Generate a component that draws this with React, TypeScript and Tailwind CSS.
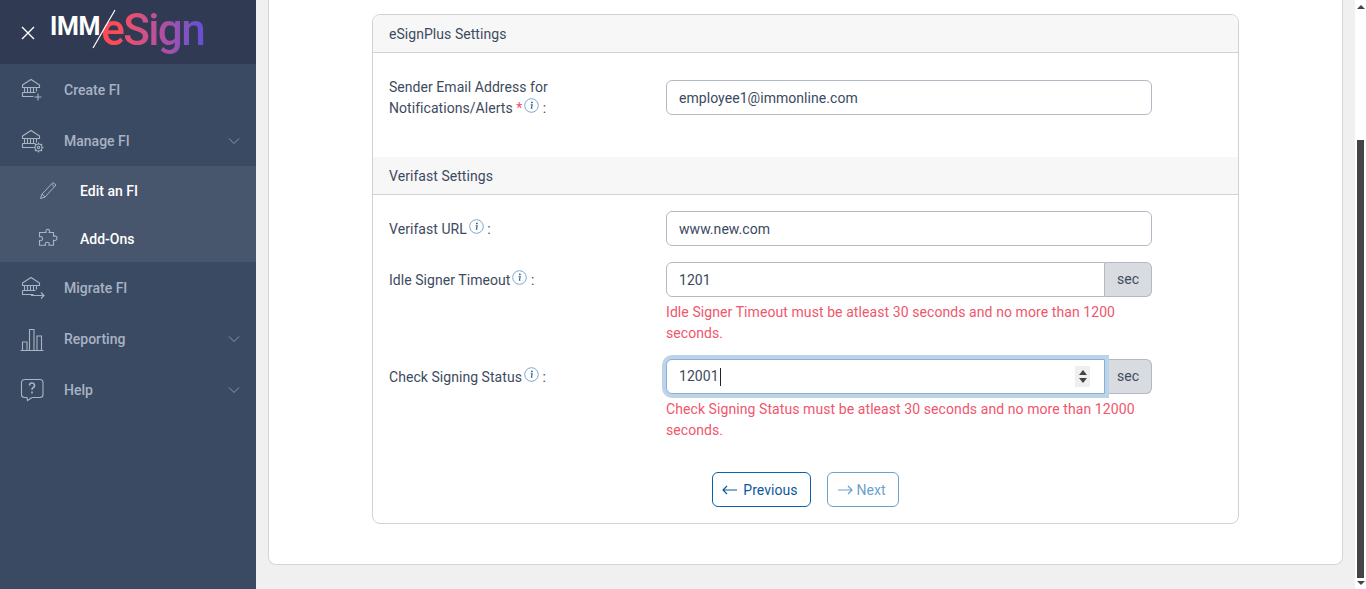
import React from "react";

const S = { stroke: "currentColor", fill: "none", strokeWidth: 1.1 } as const;

function BankBase({ children }: { children?: React.ReactNode }) {
  return (
    <svg width="26" height="26" viewBox="0 0 26 26" {...S} className="shrink-0">
      <path d="M2.500 8 11 2.500 19.500 8v2.500h-17z" />
      <path d="M4.500 10.500v5M7.500 10.500v5M10.500 10.500v5M13.500 10.500v5M16.500 10.500v4" />
      <path d="M2.500 15.500h13M2.500 15.500v4h11" />
      {children}
    </svg>
  );
}

const Chevron = () => (
  <svg width="12" height="8" viewBox="0 0 12 8" fill="none" stroke="currentColor" strokeWidth="1" className="mr-[16px] ml-auto text-[#8c99ad]">
    <path d="M1 1.500 6 6.500 11 1.500" />
  </svg>
);

function Row({ icon, label, chevron }: { icon: React.ReactNode; label: string; chevron?: boolean }) {
  return (
    <div className="flex h-[51px] items-center text-[#a8b3c4]">
      <div className="ml-[20px] flex w-[44px] items-center">{icon}</div>
      <span className="pt-[2px] text-[14px] font-medium">{label}</span>
      {chevron && <Chevron />}
    </div>
  );
}

function SubRow({ icon, label }: { icon: React.ReactNode; label: string }) {
  return (
    <div className="flex h-[48px] items-center">
      <div className="ml-[38px] flex w-[42px] items-center text-[#a8b3c4]">{icon}</div>
      <span className="pt-[2px] text-[14px] font-medium text-white">{label}</span>
    </div>
  );
}

function Sidebar() {
  return (
    <aside className="flex w-[256px] shrink-0 flex-col bg-[#3b4a63]">
      <div className="flex h-[64px] shrink-0 items-center bg-[#303b53]">
        <svg width="16" height="16" viewBox="0 0 16 16" fill="none" stroke="#fff" strokeWidth="1.400" className="ml-[20px] mt-[2px]">
          <path d="M2 2l12 12M14 2 2 14" />
        </svg>
        <div className="relative ml-[14px] flex h-[64px] items-start">
          <span className="mt-[12px] text-[25px] leading-[30px] font-bold tracking-[-0.3px] text-white">IMM</span>
          <svg width="24" height="40" viewBox="0 0 24 40" className="absolute left-[42px] top-[9px]" stroke="#fff" strokeWidth="1.200">
            <path d="M1 39 23 1" />
          </svg>
          <span className="ml-[1px] mt-[3px] bg-gradient-to-r from-[#ff4a55] from-[15%] via-[#b34f9f] via-[58%] to-[#6a4fd0] to-[95%] bg-clip-text text-[44px] leading-[54px] font-medium tracking-[-1.600px] text-transparent">eSign</span>
        </div>
      </div>
      <Row
        label="Create FI"
        icon={
          <BankBase>
            <path d="M18 16.500v7M14.500 20h7" />
          </BankBase>
        }
      />
      <Row
        label="Manage FI"
        chevron
        icon={
          <BankBase>
            <circle cx="18.500" cy="19.500" r="3.500" />
            <circle cx="18.500" cy="19.500" r="1.200" />
            <path d="M18.500 14.500v1.500M18.500 23v1.500M13.500 19.500H15M22 19.500h1.500M15 16l1 1M21 22l1 1M22 16l-1 1M16 22l-1 1" />
          </BankBase>
        }
      />
      <div className="flex flex-col bg-[#47566d]">
        <SubRow
          label="Edit an FI"
          icon={
            <svg width="20" height="20" viewBox="0 0 20 20" fill="none" stroke="currentColor" strokeWidth="1">
              <path d="M15 2.500 18 5 7 17l-4.500 1.500L4 14z" />
              <path d="M13.500 4l3 2.800M4 14l3 3" />
            </svg>
          }
        />
        <SubRow
          label="Add-Ons"
          icon={
            <svg width="20" height="20" viewBox="0 0 20 20" fill="none" stroke="currentColor" strokeWidth="1.100">
              <path d="M8 4.500C7 2 9.500 1 10.500 1.500s1.800 1.500.7 3h4.300v3.700c2-1 3.500.5 3.500 2s-1.500 3-3.500 2v5h-4.500c.8-2-.5-3-1.800-3s-2.500 1-1.700 3H1.500V12.500c2 .8 3-.5 3-1.800S3.500 8 1.500 8.800V4.500z" />
            </svg>
          }
        />
      </div>
      <Row
        label="Migrate FI"
        icon={
          <BankBase>
            <path d="M11 20.500h13M21 17.500l3 3-3 3" />
          </BankBase>
        }
      />
      <Row
        label="Reporting"
        chevron
        icon={
          <svg width="26" height="26" viewBox="0 0 26 26" {...S}>
            <path d="M0.500 24.500h23M2.500 24v-8h4.500v8M9.500 24V3.500H14V24M17 24V10h4.500v14" />
          </svg>
        }
      />
      <Row
        label="Help"
        chevron
        icon={
          <svg width="26" height="26" viewBox="0 0 26 26" {...S}>
            <path d="M4.500 2.500h15.500a3 3 0 0 1 3 3v12a3 3 0 0 1-3 3h-8l-4.500 3-.5-3h-2.500a3 3 0 0 1-3-3v-12a3 3 0 0 1 3-3z" />
            <path d="M9.500 8.500a2.500 2.500 0 1 1 3.500 2.300c-.8.400-1 .9-1 2" strokeWidth="1.600" />
            <path d="M12 14.500v2" strokeWidth="1.600" />
          </svg>
        }
      />
    </aside>
  );
}

const Info = () => (
  <svg width="15" height="15" viewBox="0 0 15 15" className="ml-[2px] inline-block align-[0px]">
    <circle cx="7.500" cy="7.500" r="6.800" fill="none" stroke="#7fa6cc" strokeWidth="1" />
    <circle cx="7.900" cy="4.400" r="0.900" fill="#33618f" />
    <path d="M6.700 6.700h1.500l-.8 3.600h1" fill="none" stroke="#33618f" strokeWidth="1.100" />
  </svg>
);

function SectionHead({ title }: { title: string }) {
  return <div className="flex h-[38px] items-center border-b border-[#cfd2d6] bg-[#f7f7f7] pt-[2px] pl-[16px]">{title}</div>;
}

function FieldRow({ label, children, className }: { label: React.ReactNode; children: React.ReactNode; className?: string }) {
  return (
    <div className={"flex " + (className ?? "")}>
      <div className="flex h-[35px] w-[293px] shrink-0 items-center pl-[16px]">
        <div className="leading-[21px]">{label}</div>
      </div>
      <div className="w-[486px]">{children}</div>
    </div>
  );
}

const inputCls = "block h-[35px] w-full rounded-[6px] border border-[#b3b9c4] bg-white px-[12px] text-[14px] tracking-[0.05px] text-[#3a4a5f] outline-none";

const Sec = () => (
  <div className="flex w-[47px] shrink-0 items-center justify-center rounded-r-[6px] border border-l-0 border-[#b3b9c4] bg-[#d8dbe0]">sec</div>
);

const Err = ({ children }: { children: React.ReactNode }) => (
  <div className="mt-[5px] text-[14px] leading-[21px] tracking-[0.08px] text-[#f0566c]">{children}</div>
);

const One = ({ children }: { children: React.ReactNode }) => <div className="pt-[2px]">{children}</div>;

function Panel() {
  return (
    <div className="mx-[103px] overflow-hidden rounded-[8px] border border-[#cfd2d6] bg-white text-[14px] tracking-[0.05px] text-[#3d4b60]">
      <SectionHead title="eSignPlus Settings" />
      <FieldRow className="mt-[27px]" label={<>Sender Email Address for<br />Notifications/Alerts <span className="text-[#ef5168]">*</span><Info /> :</>}>
        <input readOnly value="employee1@immonline.com" className={inputCls} />
      </FieldRow>
      <div className="mt-[42px]">
        <SectionHead title="Verifast Settings" />
      </div>
      <FieldRow className="mt-[16px]" label={<One>Verifast URL<Info /> :</One>}>
        <input readOnly value="www.new.com" className={inputCls} />
      </FieldRow>
      <FieldRow className="mt-[16px]" label={<One>Idle Signer Timeout<Info /> :</One>}>
        <div className="flex">
          <input readOnly value="1201" className={inputCls + " rounded-r-none"} />
          <Sec />
        </div>
        <Err>
          Idle Signer Timeout must be atleast 30 seconds and no more than 1200 seconds.
        </Err>
      </FieldRow>
      <FieldRow className="mt-[15px]" label={<One>Check Signing Status<Info /> :</One>}>
        <div className="flex">
          <div className="relative z-10 flex h-[35px] flex-1 items-center rounded-l-[6px] border border-[#86b0d8] bg-white px-[12px] text-[14px] shadow-[0_0_0_4px_#bdd4e8]">
            12001
            <span className="ml-[1px] h-[18px] w-px bg-[#222]" />
            <span className="absolute right-[14px] top-[6px] flex h-[21px] w-[15px] flex-col items-center justify-center gap-[3px] bg-[#efefef]">
              <span className="h-0 w-0 border-x-[4px] border-b-[5px] border-x-transparent border-b-[#444]" />
              <span className="h-0 w-0 border-x-[4px] border-t-[5px] border-x-transparent border-t-[#444]" />
            </span>
          </div>
          <Sec />
        </div>
        <Err>
          Check Signing Status must be atleast 30 seconds and no more than 12000 seconds.
        </Err>
      </FieldRow>
      <div className="mt-[31px] mb-[16px] flex justify-center gap-[16px]">
        <button className="flex h-[35px] items-center gap-[5px] rounded-[6px] border border-[#0b62a8] bg-white pt-[1px] pr-[12px] pl-[9px] text-[#0b5a9c]">
          <svg width="16" height="10" viewBox="0 0 16 10" fill="none" stroke="currentColor" strokeWidth="1.200"><path d="M15 5H1M5 1 1 5l4 4" /></svg>
          <span className="pt-[1px]">Previous</span>
        </button>
        <button className="flex h-[35px] items-center gap-[4px] rounded-[6px] border border-[#6da1cd] bg-white pt-[1px] pr-[12px] pl-[9px] text-[#6da1cd]">
          <svg width="16" height="10" viewBox="0 0 16 10" fill="none" stroke="currentColor" strokeWidth="1.200"><path d="M1 5h14M11 1l4 4-4 4" /></svg>
          <span className="pt-[1px]">Next</span>
        </button>
      </div>
    </div>
  );
}

function Scrollbar() {
  return (
    <div className="flex w-[11px] shrink-0 flex-col items-center bg-white">
      <div className="mt-[5px] h-0 w-0 border-x-[4px] border-b-[4px] border-x-transparent border-b-[#444]" />
      <div className="mt-[131px] h-[438px] w-[7px] bg-[#444]" />
      <div className="mt-[3px] h-0 w-0 border-x-[4px] border-t-[4px] border-x-transparent border-t-[#444]" />
    </div>
  );
}

export default function App() {
  return (
    <div className="flex h-[589px] w-[1366px] overflow-hidden bg-[#f0f0f0] [font-family:Roboto,sans-serif]">
      <Sidebar />
      <main className="flex-1 px-[12px]">
        <div className="h-[565px] rounded-b-[8px] border border-t-0 border-[#d5d5d5] bg-white pt-[14px]">
          <Panel />
        </div>
      </main>
      <Scrollbar />
    </div>
  );
}
